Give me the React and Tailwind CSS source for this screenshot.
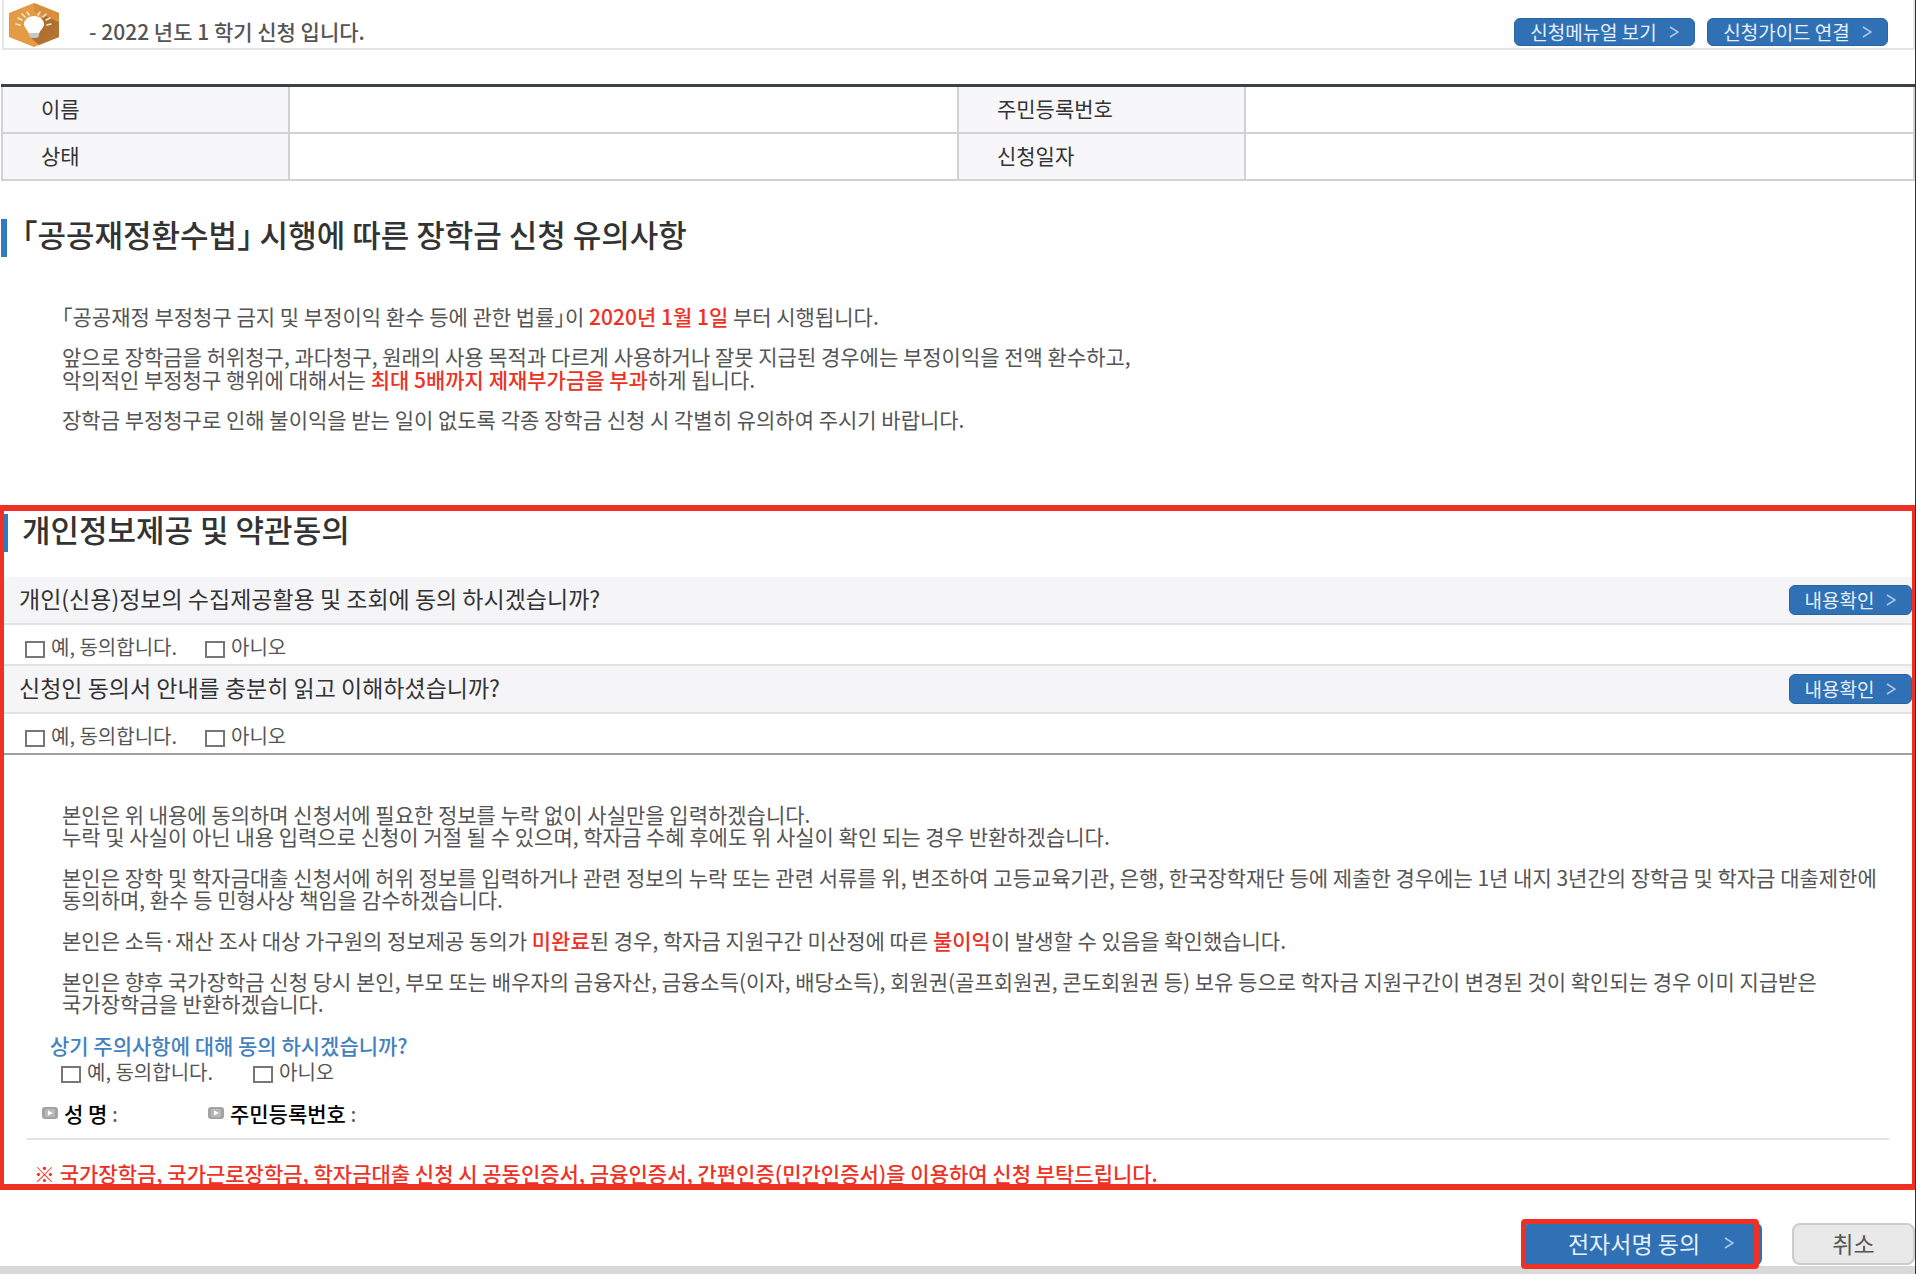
import React, { useState } from "react";

const consentItems = [
  { id: "privacy", question: "개인(신용)정보의 수집제공활용 및 조회에 동의 하시겠습니까?" },
  { id: "guide", question: "신청인 동의서 안내를 충분히 읽고 이해하셨습니까?" },
];

const Chevron = () => (
  <svg viewBox="0 0 10 12" className="w-[10px] h-3 shrink-0" fill="none">
    <path d="M1 1 L9 6 L1 11" stroke="#a9c6e6" strokeWidth="1.6" />
  </svg>
);

const BulbIcon = () => (
  <svg viewBox="0 0 50 44" className="w-[50px] h-[44px] shrink-0">
    <defs>
      <linearGradient id="bulb-shadow" x1="0" y1="0" x2="1" y2="1">
        <stop offset="0" stopColor="#a5662a" />
        <stop offset="1" stopColor="#b87835" />
      </linearGradient>
    </defs>
    <polygon points="25,0 50,10 50,34 25,44 0,34 0,10" fill="#e39c45" />
    <polygon points="25,0 50,10 50,17 38,14 25,9" fill="#d78c3e" />
    <polygon points="33,15 37,13 50,19 50,34 30,42 21,34 29,30" fill="url(#bulb-shadow)" />
    <g stroke="#fbe9cd" strokeWidth="1.5" strokeLinecap="round">
      <path d="M7 21l4 1M9 15l4 2M13 11l3 3M18 9l2 3M31 9l-2 3M37 11l-3 3M41 15l-4 2M42 21l-4 1" />
    </g>
    <path
      d="M25 13c-6 0-10 4-10 8 0 4 4 6 5 10h10c1-4 5-6 5-10 0-4-4-8-10-8z"
      fill="#fff"
    />
    <path d="M20 30h10v3l-2 2h-6l-2-2z" fill="#c4c6c8" />
  </svg>
);

const ArrowBullet = () => (
  <svg viewBox="0 0 16 12" className="w-4 h-3 shrink-0">
    <rect width="16" height="12" rx="3" fill="#a3a3a3" />
    <rect x="3" y="2" width="10" height="8" rx="1" fill="#b9b9b9" />
    <path d="M6 3.500 L11 6 L6 8.500z" fill="#fff" />
  </svg>
);

const BlueButton = ({ children, className }) => (
  <button
    type="button"
    className={`flex items-center justify-center gap-3 rounded-md border border-[#2a64a3] bg-[#3071b5] text-[19px] leading-5 text-[#e6f0fa] ${className}`}
  >
    {children}
    <Chevron />
  </button>
);

const SectionTitle = ({ children, className }) => (
  <h2
    className={`flex h-[38px] items-start border-[#3279be] text-[31px] leading-[30px] font-medium text-[#333] [font-feature-settings:'halt'] ${className}`}
  >
    {children}
  </h2>
);

const YesNo = ({ id, gap }) => {
  const [answer, setAnswer] = useState("");

  return (
    <div className={`flex items-center ${gap}`}>
      {[
        { value: "yes", text: "예, 동의합니다." },
        { value: "no", text: "아니오" },
      ].map((option) => (
        <label
          key={option.value}
          htmlFor={`${id}-${option.value}`}
          className="flex items-end gap-[6px] text-[20px] leading-[22px] text-[#555]"
        >
          <input
            type="checkbox"
            id={`${id}-${option.value}`}
            checked={answer === option.value}
            onChange={() => setAnswer(answer === option.value ? "" : option.value)}
            className="h-[17px] w-5 appearance-none border-2 border-[#777] bg-white checked:bg-[#3071b5]"
          />
          {option.text}
        </label>
      ))}
    </div>
  );
};

const Red = ({ children }) => <strong className="font-medium text-[#ee3124]">{children}</strong>;

const App = () => {
  return (
    <div className="flex min-h-screen flex-col border-r border-[#333] bg-white font-['Noto_Sans_CJK_KR',sans-serif]">
      {/* Notice bar */}
      <header className="ml-[2px] flex h-[50px] items-start border-x-2 border-b-2 border-[#e5e5e5] pl-[5px] pr-[25px]">
        <div className="pt-[3px]">
          <BulbIcon />
        </div>
        <p className="grow pl-[30px] pt-4 text-[21px] leading-[30px] font-medium text-[#555]">
          - 2022 년도 1 학기 신청 입니다.
        </p>
        <div className="flex gap-3 pt-[18px]">
          <BlueButton className="h-7 w-[181px]">신청메뉴얼 보기</BlueButton>
          <BlueButton className="h-7 w-[181px]">신청가이드 연결</BlueButton>
        </div>
      </header>

      {/* Applicant */}
      <table className="mt-[34px] ml-[1px] table-fixed border-collapse border-2 border-t-[3px] border-[#d2d2d2] border-t-[#3b4245] text-left text-[21px] leading-6 text-[#333]">
        <tbody>
          {[
            ["이름", "주민등록번호"],
            ["상태", "신청일자"],
          ].map((row) => (
            <tr key={row[0]} className="h-[47px]">
              {row.map((name) => (
                <React.Fragment key={name}>
                  <th
                    scope="row"
                    className="w-[15%] border-r-2 border-b-2 border-[#d2d2d2] bg-[#f7f7fa] pb-[2px] pl-[38px] font-normal"
                  >
                    {name}
                  </th>
                  <td className="w-[35%] border-r-2 border-b-2 border-[#d2d2d2]"></td>
                </React.Fragment>
              ))}
            </tr>
          ))}
        </tbody>
      </table>

      {/* Public finance act notice */}
      <section className="mt-[38px]">
        <SectionTitle className="ml-[1px] border-l-[6px] pl-[15px]">
          「공공재정환수법」 시행에 따른 장학금 신청 유의사항
        </SectionTitle>
        <div className="mt-12 flex flex-col gap-[17px] px-[62px] text-[21px] leading-[23px] text-[#555]">
          <p className="[font-feature-settings:'halt']">
            「공공재정 부정청구 금지 및 부정이익 환수 등에 관한 법률」이 <Red>2020년 1월 1일</Red> 부터 시행됩니다.
          </p>
          <p>
            앞으로 장학금을 허위청구, 과다청구, 원래의 사용 목적과 다르게 사용하거나 잘못 지급된 경우에는 부정이익을 전액 환수하고,
            <br />
            악의적인 부정청구 행위에 대해서는 <Red>최대 5배까지 제재부가금을 부과</Red>하게 됩니다.
          </p>
          <p>장학금 부정청구로 인해 불이익을 받는 일이 없도록 각종 장학금 신청 시 각별히 유의하여 주시기 바랍니다.</p>
        </div>
      </section>

      {/* Privacy and terms consent */}
      <section className="mt-[74px] border-4 border-y-[6px] border-r-[3px] border-[#ee3124]">
        <SectionTitle className="mt-[3px] border-l-4 pl-[14px]">개인정보제공 및 약관동의</SectionTitle>

        <div className="mt-[25px] divide-y-2 divide-[#e2e2e2] border-b-2 border-[#a0a0a0]">
          {consentItems.map((item) => (
            <div key={item.id}>
              <div className="flex h-12 items-center justify-between border-b-2 border-[#e2e2e2] bg-[#f5f5f8] pl-[15px]">
                <p className="pb-1 text-[23px] leading-6 text-[#333]">{item.question}</p>
                <BlueButton className="h-[30px] w-[123px]">내용확인</BlueButton>
              </div>
              <div className="h-[39px] pt-[11px] pl-[21px]">
                <YesNo id={item.id} gap="gap-7" />
              </div>
            </div>
          ))}
        </div>

        <div className="mt-[48px] flex flex-col gap-[19px] pl-[58px] pr-[25px] text-[21px] leading-[22px] text-[#555]">
          <p>
            본인은 위 내용에 동의하며 신청서에 필요한 정보를 누락 없이 사실만을 입력하겠습니다.
            <br />
            누락 및 사실이 아닌 내용 입력으로 신청이 거절 될 수 있으며, 학자금 수혜 후에도 위 사실이 확인 되는 경우 반환하겠습니다.
          </p>
          <p>
            본인은 장학 및 학자금대출 신청서에 허위 정보를 입력하거나 관련 정보의 누락 또는 관련 서류를 위, 변조하여 고등교육기관, 은행, 한국장학재단 등에 제출한 경우에는 1년 내지 3년간의 장학금 및 학자금 대출제한에
            <br />
            동의하며, 환수 등 민형사상 책임을 감수하겠습니다.
          </p>
          <p>
            본인은 소득·재산 조사 대상 가구원의 정보제공 동의가 <Red>미완료</Red>된 경우, 학자금 지원구간 미산정에 따른 <Red>불이익</Red>이 발생할 수 있음을 확인했습니다.
          </p>
          <p>
            본인은 향후 국가장학금 신청 당시 본인, 부모 또는 배우자의 금융자산, 금융소득(이자, 배당소득), 회원권(골프회원권, 콘도회원권 등) 보유 등으로 학자금 지원구간이 변경된 것이 확인되는 경우 이미 지급받은
            <br />
            국가장학금을 반환하겠습니다.
          </p>
        </div>

        <div className="mt-[19px] pl-[46px]">
          <p className="text-[21px] leading-6 font-medium text-[#4382c0]">상기 주의사항에 대해 동의 하시겠습니까?</p>
          <div className="mt-1 pl-[11px]">
            <YesNo id="caution" gap="gap-10" />
          </div>
        </div>

        <div className="mx-[23px] mt-[18px] flex gap-[90px] border-b-2 border-[#e2e2e2] pb-[13px] pl-[15px] text-[21px] leading-6 text-[#555]">
          <p className="flex items-center gap-[6px]">
            <ArrowBullet />
            <span>
              <b className="font-medium text-black">성 명</b> :
            </span>
          </p>
          <p className="flex items-center gap-[6px]">
            <ArrowBullet />
            <span>
              <b className="font-medium text-black">주민등록번호</b> :
            </span>
          </p>
        </div>

        <p className="mt-[22px] pl-[30px] text-[21px] leading-[22px] font-medium text-[#ee3124]">
          ※ 국가장학금, 국가근로장학금, 학자금대출 신청 시 공동인증서, 금융인증서, 간편인증(민간인증서)을 이용하여 신청 부탁드립니다.
        </p>
      </section>

      {/* Actions */}
      <footer className="mt-[33px] flex h-[51px] items-start justify-end gap-[30px] border-b-8 border-[#d9d9d9]">
        <div className="relative">
          <button
            type="button"
            className="flex h-[42px] w-[238px] items-center justify-center gap-6 rounded-md bg-[#3071b5] pb-[2px] pl-4 text-[23px] leading-6 text-[#e6f0fa]"
          >
            전자서명 동의
            <Chevron />
          </button>
          <span className="pointer-events-none absolute -top-1 right-[3px] -bottom-1 -left-[3px] rounded-sm border-[5px] border-[#ee3124]"></span>
        </div>
        <button
          type="button"
          className="h-[42px] w-[123px] rounded-lg border-2 border-[#ccc] bg-[#e9e9e9] pb-[2px] text-[23px] leading-6 text-[#555]"
        >
          취소
        </button>
      </footer>
    </div>
  );
};

export default App;
